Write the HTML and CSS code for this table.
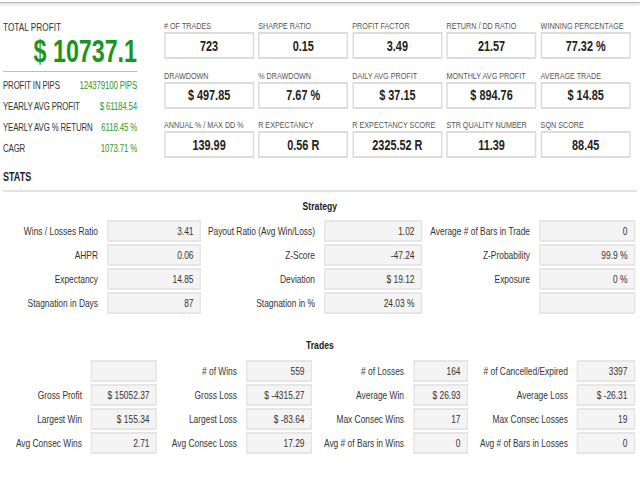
FILE: index.html
```html
<!DOCTYPE html>
<html>
<head>
<meta charset="utf-8">
<link rel="stylesheet" href="styles.css">
</head>
<body>
<div class="page">
<div class="topbar"></div>
<div class="summary">
  <div class="totals">
    <div class="total-title">TOTAL PROFIT</div>
    <div class="total-value">$ 10737.1</div>
    <div class="total-rows">
      <div class="trow"><span>PROFIT IN PIPS</span><span class="green">124379100 PIPS</span></div>
      <div class="trow"><span>YEARLY AVG PROFIT</span><span class="green">$ 61184.54</span></div>
      <div class="trow"><span>YEARLY AVG % RETURN</span><span class="green">6118.45 %</span></div>
      <div class="trow"><span>CAGR</span><span class="green">1073.71 %</span></div>
    </div>
  </div>
  <div class="metrics">
    <div class="metric"><div class="metric-label"># OF TRADES</div><div class="metric-box">723</div></div>
    <div class="metric"><div class="metric-label">SHARPE RATIO</div><div class="metric-box">0.15</div></div>
    <div class="metric"><div class="metric-label">PROFIT FACTOR</div><div class="metric-box">3.49</div></div>
    <div class="metric"><div class="metric-label">RETURN / DD RATIO</div><div class="metric-box">21.57</div></div>
    <div class="metric"><div class="metric-label">WINNING PERCENTAGE</div><div class="metric-box">77.32 %</div></div>
    <div class="metric"><div class="metric-label">DRAWDOWN</div><div class="metric-box">$ 497.85</div></div>
    <div class="metric"><div class="metric-label">% DRAWDOWN</div><div class="metric-box">7.67 %</div></div>
    <div class="metric"><div class="metric-label">DAILY AVG PROFIT</div><div class="metric-box">$ 37.15</div></div>
    <div class="metric"><div class="metric-label">MONTHLY AVG PROFIT</div><div class="metric-box">$ 894.76</div></div>
    <div class="metric"><div class="metric-label">AVERAGE TRADE</div><div class="metric-box">$ 14.85</div></div>
    <div class="metric"><div class="metric-label">ANNUAL % / MAX DD %</div><div class="metric-box">139.99</div></div>
    <div class="metric"><div class="metric-label">R EXPECTANCY</div><div class="metric-box">0.56 R</div></div>
    <div class="metric"><div class="metric-label">R EXPECTANCY SCORE</div><div class="metric-box">2325.52 R</div></div>
    <div class="metric"><div class="metric-label">STR QUALITY NUMBER</div><div class="metric-box">11.39</div></div>
    <div class="metric"><div class="metric-label">SQN SCORE</div><div class="metric-box">88.45</div></div>
  </div>
</div>

<div class="stats-head">STATS</div>

<div class="section-title">Strategy</div>
<div class="grid strategy">
  <div class="lbl">Wins / Losses Ratio</div><div class="val">3.41</div>
  <div class="lbl">Payout Ratio (Avg Win/Loss)</div><div class="val">1.02</div>
  <div class="lbl">Average # of Bars in Trade</div><div class="val">0</div>
  <div class="lbl">AHPR</div><div class="val">0.06</div>
  <div class="lbl">Z-Score</div><div class="val">-47.24</div>
  <div class="lbl">Z-Probability</div><div class="val">99.9 %</div>
  <div class="lbl">Expectancy</div><div class="val">14.85</div>
  <div class="lbl">Deviation</div><div class="val">$ 19.12</div>
  <div class="lbl">Exposure</div><div class="val">0 %</div>
  <div class="lbl">Stagnation in Days</div><div class="val">87</div>
  <div class="lbl">Stagnation in %</div><div class="val">24.03 %</div>
  <div class="lbl"></div><div class="val"></div>
</div>

<div class="section-title trades-title">Trades</div>
<div class="grid trades">
  <div class="lbl"></div><div class="val"></div>
  <div class="lbl"># of Wins</div><div class="val">559</div>
  <div class="lbl"># of Losses</div><div class="val">164</div>
  <div class="lbl"># of Cancelled/Expired</div><div class="val">3397</div>
  <div class="lbl">Gross Profit</div><div class="val">$ 15052.37</div>
  <div class="lbl">Gross Loss</div><div class="val">$ -4315.27</div>
  <div class="lbl">Average Win</div><div class="val">$ 26.93</div>
  <div class="lbl">Average Loss</div><div class="val">$ -26.31</div>
  <div class="lbl">Largest Win</div><div class="val">$ 155.34</div>
  <div class="lbl">Largest Loss</div><div class="val">$ -83.64</div>
  <div class="lbl">Max Consec Wins</div><div class="val">17</div>
  <div class="lbl">Max Consec Losses</div><div class="val">19</div>
  <div class="lbl">Avg Consec Wins</div><div class="val">2.71</div>
  <div class="lbl">Avg Consec Loss</div><div class="val">17.29</div>
  <div class="lbl">Avg # of Bars in Wins</div><div class="val">0</div>
  <div class="lbl">Avg # of Bars in Losses</div><div class="val">0</div>
</div>
</div>
</body>
</html>
```

FILE: styles.css
```css
html, body {
  margin: 0;
  padding: 0;
  background: #fff;
}
body {
  font-family: "Liberation Sans", Arial, sans-serif;
  color: #333;
  width: 640px;
  height: 480px;
  overflow: hidden;
}
/* the report is laid out at its natural width and shown horizontally condensed */
.page {
  width: 853px;
  transform: scaleX(0.75);
  transform-origin: 0 0;
}
.topbar {
  margin-top: 2px;
  height: 4px;
  border-top: 1px solid #b8b8b8;
  background: linear-gradient(#e2e2e2, #fff);
}
.summary {
  display: flex;
  padding: 13px 12px 0 4px;
}
.totals {
  width: 178.7px;
  flex: none;
}
.total-title {
  margin-top: 1px;
  font-size: 11px;
  line-height: 12px;
  color: #333;
}
.total-value {
  margin-top: 3px;
  font-size: 31px;
  line-height: 32px;
  font-weight: bold;
  text-align: right;
  color: #17961b;
  padding-bottom: 3px;
  border-bottom: 1px solid #bdbdbd;
}
.total-rows {
  padding-top: 3px;
}
.trow {
  display: flex;
  justify-content: space-between;
  font-size: 10.5px;
  line-height: 21px;
  letter-spacing: -0.2px;
  white-space: nowrap;
  color: #333;
}
.green {
  color: #2a9a2a;
}
.metrics {
  margin-left: 36px;
  flex: 1;
  display: grid;
  grid-template-columns: repeat(5, minmax(0, 1fr));
  column-gap: 5.33px;
  row-gap: 9.5px;
}
.metric-label {
  font-size: 9.6px;
  line-height: 12px;
  color: #555;
  white-space: nowrap;
}
.metric-box {
  height: 27px;
  box-sizing: border-box;
  border: 2px solid #dcdcdc;
  display: flex;
  align-items: center;
  justify-content: center;
  font-size: 14.5px;
  font-weight: bold;
  color: #222;
}
.stats-head {
  margin: 11px 4px 0 4px;
  font-size: 12px;
  line-height: 14px;
  font-weight: bold;
  color: #222;
  padding-bottom: 6px;
  border-bottom: 2px solid #e2e2e2;
}
.section-title {
  margin-top: 7px;
  text-align: center;
  font-size: 11.5px;
  line-height: 14px;
  font-weight: bold;
  color: #222;
}
.trades-title {
  margin-top: 24px;
}
.grid {
  display: grid;
  margin: 7px 6px 0 4px;
  row-gap: 2px;
}
.trades {
  margin-top: 8px;
  grid-template-columns: 117.3px 88px 118.7px 88px 134.7px 73.3px 145.3px 77.3px;
}
.strategy {
  grid-template-columns: 138.7px 125.3px 164px 130.7px 156px 128px;
}
.lbl {
  text-align: right;
  padding-right: 12px;
  font-size: 11.2px;
  line-height: 22px;
  white-space: nowrap;
  color: #333;
}
.val {
  height: 22px;
  box-sizing: border-box;
  background: #f4f4f4;
  border: 2px solid #e6e6e6;
  text-align: right;
  padding-right: 8px;
  font-size: 11.2px;
  line-height: 18px;
  color: #333;
}
```
